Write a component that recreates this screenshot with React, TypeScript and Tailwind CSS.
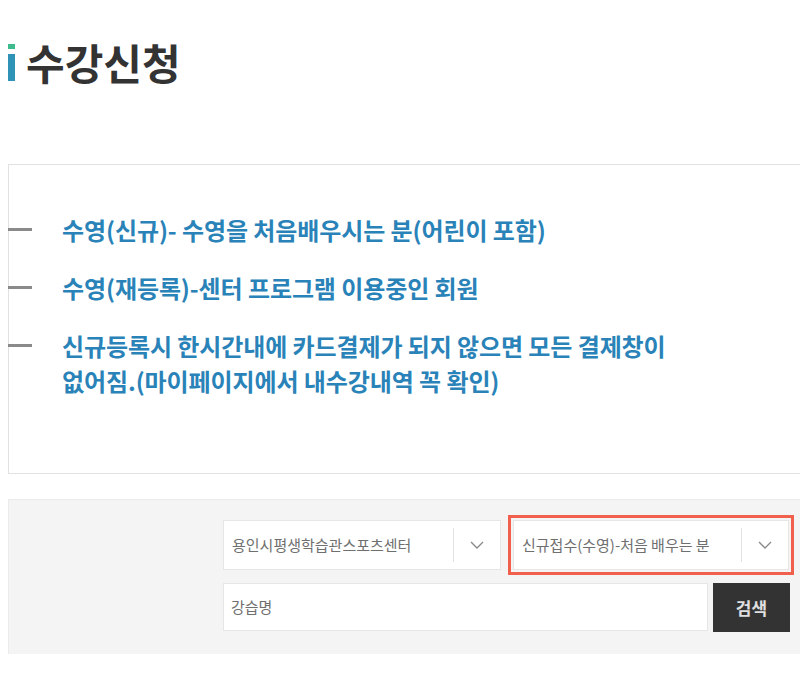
import React from "react";

const Chevron = () => (
  <svg width="14" height="8" viewBox="0 0 14 8" fill="none">
    <path d="M1 1L7 7L13 1" stroke="#8a8a8a" strokeWidth="1.4" />
  </svg>
);

function Select({ label, w, highlight }: { label: string; w: string; highlight?: boolean }) {
  return (
    <div
      className={`relative flex h-[50px] items-center border border-[#e6e6e6] bg-white ${w} ${
        highlight ? "outline-[3px] outline-solid outline-[#f0604d] outline-offset-[2px]" : ""
      }`}
    >
      <span className="flex-1 pl-[8px] text-[15px] text-[#6f6f6f]">{label}</span>
      <span className="h-[34px] w-px bg-[#e2e2e2]" />
      <span className="flex w-[46px] items-center justify-center">
        <Chevron />
      </span>
    </div>
  );
}

const items: string[] = [
  "수영(신규)- 수영을 처음배우시는 분(어린이 포함)",
  "수영(재등록)-센터 프로그램 이용중인 회원",
  "신규등록시 한시간내에 카드결제가 되지 않으면 모든 결제창이 없어짐.(마이페이지에서 내수강내역 꼭 확인)",
];

export default function App() {
  return (
    <div
      className="h-[680px] w-[800px] overflow-hidden bg-white"
      style={{ fontFamily: '"Noto Sans CJK KR", "Noto Sans", sans-serif' }}
    >
      <div className="flex items-center pl-2 pt-[41px]">
        <div className="flex w-[7px] flex-col">
          <span className="h-[5px] w-[7px] bg-[#3dbb8d]" />
          <span className="mt-[5px] h-[27px] w-[7px] bg-[#2f93b7]" />
        </div>
        <h1 className="ml-[11px] text-[42px] font-bold leading-[42px] text-[#333333]">수강신청</h1>
      </div>

      <div className="ml-2 mt-[81px] w-[820px] border border-[#e1e1e1] pb-[75px] pt-[47px]">
        <ul className="flex flex-col gap-[23px]">
          {items.map((t) => (
            <li key={t} className="flex items-start">
              <span className="ml-[-1px] mt-[16px] h-[3px] w-[24px] shrink-0 bg-[#8a8a8a]" />
              <span className="ml-[30px] max-w-[620px] break-keep text-[24px] font-bold leading-[35px] tracking-[-0.1px] text-[#2a83b8]">
                {t}
              </span>
            </li>
          ))}
        </ul>
      </div>

      <div className="ml-2 mt-[25px] w-[820px] border-l border-t border-[#ebebeb] bg-[#f4f4f4] pb-[22px] pl-[214px] pt-[20px]">
        <div className="flex w-[567px] flex-col gap-[13px]">
          <div className="flex gap-[12px]">
            <Select label="용인시평생학습관스포츠센터" w="w-[278px]" />
            <Select label="신규접수(수영)-처음 배우는 분" w="w-[276px]" highlight />
          </div>
          <div className="flex gap-[5px]">
            <div className="flex h-[48px] w-[485px] items-center border border-[#e6e6e6] bg-white pl-[7px] text-[15px] text-[#6f6f6f]">
              강습명
            </div>
            <button className="h-[49px] w-[77px] bg-[#333333] text-[17px] font-bold text-[#e0e0e0]">
              검색
            </button>
          </div>
        </div>
      </div>
    </div>
  );
}
